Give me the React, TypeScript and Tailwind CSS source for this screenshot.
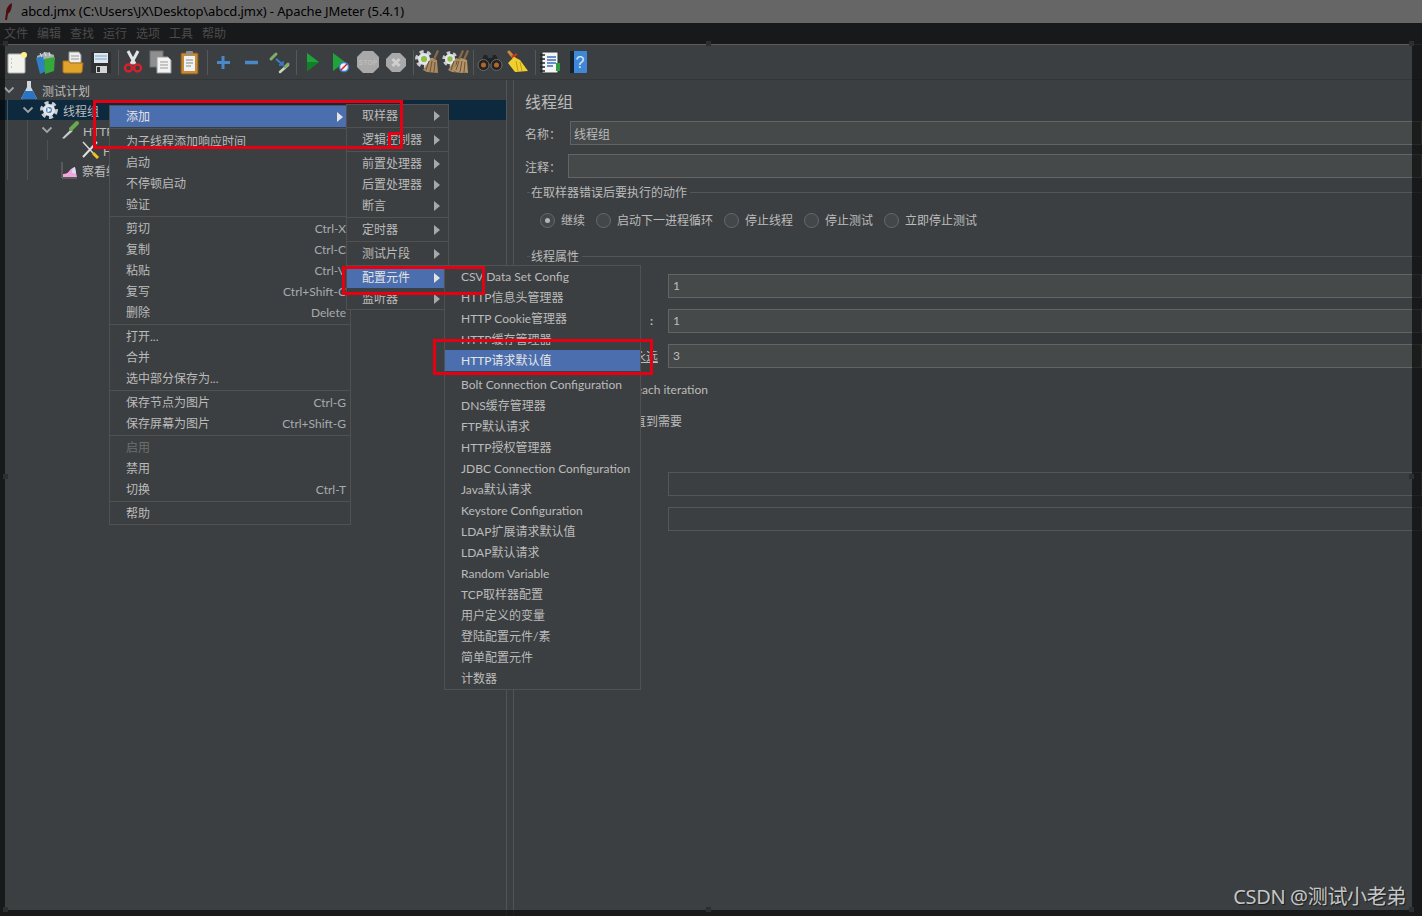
import type { ReactNode } from 'react'

type MenuItem = { label?: string; shortcut?: string; arrow?: boolean; active?: boolean; disabled?: boolean; sep?: boolean; tall?: boolean }

const mainMenu: MenuItem[] = [
  { label: '添加', arrow: true, active: true },
  { sep: true },
  { label: '为子线程添加响应时间', tall: true },
  { label: '启动' },
  { label: '不停顿启动' },
  { label: '验证' },
  { sep: true },
  { label: '剪切', shortcut: 'Ctrl-X' },
  { label: '复制', shortcut: 'Ctrl-C' },
  { label: '粘贴', shortcut: 'Ctrl-V' },
  { label: '复写', shortcut: 'Ctrl+Shift-C' },
  { label: '删除', shortcut: 'Delete' },
  { sep: true },
  { label: '打开...' },
  { label: '合并' },
  { label: '选中部分保存为...' },
  { sep: true },
  { label: '保存节点为图片', shortcut: 'Ctrl-G' },
  { label: '保存屏幕为图片', shortcut: 'Ctrl+Shift-G' },
  { sep: true },
  { label: '启用', disabled: true },
  { label: '禁用' },
  { label: '切换', shortcut: 'Ctrl-T' },
  { sep: true },
  { label: '帮助' },
]

const addMenu: MenuItem[] = [
  { label: '取样器', arrow: true },
  { sep: true },
  { label: '逻辑控制器', arrow: true },
  { sep: true },
  { label: '前置处理器', arrow: true },
  { label: '后置处理器', arrow: true },
  { label: '断言', arrow: true },
  { sep: true },
  { label: '定时器', arrow: true },
  { sep: true },
  { label: '测试片段', arrow: true },
  { sep: true },
  { label: '配置元件', arrow: true, active: true },
  { label: '监听器', arrow: true },
]

const configMenu: MenuItem[] = [
  { label: 'CSV Data Set Config' },
  { label: 'HTTP信息头管理器' },
  { label: 'HTTP Cookie管理器' },
  { label: 'HTTP缓存管理器' },
  { label: 'HTTP请求默认值', active: true },
  { sep: true },
  { label: 'Bolt Connection Configuration' },
  { label: 'DNS缓存管理器' },
  { label: 'FTP默认请求' },
  { label: 'HTTP授权管理器' },
  { label: 'JDBC Connection Configuration' },
  { label: 'Java默认请求' },
  { label: 'Keystore Configuration' },
  { label: 'LDAP扩展请求默认值' },
  { label: 'LDAP默认请求' },
  { label: 'Random Variable' },
  { label: 'TCP取样器配置' },
  { label: '用户定义的变量' },
  { label: '登陆配置元件/素' },
  { label: '简单配置元件' },
  { label: '计数器' },
]

function Menu({ items, className, inset }: { items: MenuItem[]; className: string; inset: string }) {
  return (
    <div className={`absolute bg-[#3c3f41] border border-[#515151] ${className}`}>
      {items.map((item, i) =>
        item.sep ? (
          <div key={i} className="h-[3px] flex items-center">
            <div className="h-px w-full bg-[#515151]" />
          </div>
        ) : (
          <div
            key={i}
            className={`flex items-center justify-between whitespace-nowrap ${item.tall ? 'h-[22px]' : 'h-[21px]'} ${inset} ${
              item.active ? 'bg-[#4b6eaf] text-[#e4e4e4]' : item.disabled ? 'text-[#6e6e6e]' : 'text-[#bbbbbb]'
            }`}
          >
            <span className="pt-px">{item.label}</span>
            {item.shortcut && <span className="text-[#a6abad]">{item.shortcut}</span>}
            {item.arrow && (
              <svg width="6" height="10" viewBox="0 0 6 10" className="mr-[3px]">
                <path d="M0 0l6 5-6 5z" fill={item.active ? '#e4e4e4' : '#a8a8a8'} />
              </svg>
            )}
          </div>
        ),
      )}
    </div>
  )
}

function Tool({ children }: { children: ReactNode }) {
  return (
    <div className="w-[28px] h-[28px] shrink-0">
      <svg width="28" height="28" viewBox="0 0 28 28">
        {children}
      </svg>
    </div>
  )
}

function Broom({ x = 0, fill = '#a98a62' }: { x?: number; fill?: string }) {
  return (
    <g transform={`translate(${x} 0)`}>
      <path d="M23 2l2 1-4 9-2-1z" fill="#8a6a45" />
      <path d="M17 10l6 2 1 13-11-1-4-2z" fill={fill} />
      <path d="M15 13l-3 9M18 13l-2 11M21 14l-1 10" stroke="#6e5434" />
    </g>
  )
}

function Gear({ cx, cy, r, core }: { cx: number; cy: number; r: number; core: string }) {
  return (
    <g>
      <circle cx={cx} cy={cy} r={r} fill="none" stroke="#c9ccd0" strokeWidth={r * 0.55} strokeDasharray={`${r * 0.55} ${r * 0.47}`} />
      <circle cx={cx} cy={cy} r={r * 0.86} fill="#e3e5e8" />
      <circle cx={cx} cy={cy} r={r * 0.44} fill={core} />
    </g>
  )
}

function Dropper({ d }: { d: string }) {
  return <path d={d} stroke="#7fae6a" strokeWidth="3" strokeLinecap="round" fill="none" />
}

function Chevron() {
  return (
    <svg width="12" height="8" viewBox="0 0 12 8" className="shrink-0">
      <path d="M1.5 1.5L6 6l4.5-4.5" fill="none" stroke="#a0a3a5" strokeWidth="1.8" />
    </svg>
  )
}

function Radio({ label, checked }: { label: string; checked?: boolean }) {
  return (
    <div className="flex items-center gap-[6px]">
      <div className="w-[15px] h-[15px] rounded-full border border-[#666a6c] bg-[#43474a] flex items-center justify-center">
        {checked && <div className="w-[5px] h-[5px] rounded-full bg-[#b4b4b4]" />}
      </div>
      <span className="pt-px">{label}</span>
    </div>
  )
}

function Legend({ children }: { children: ReactNode }) {
  return (
    <div className="h-[16px] ml-[2px] flex items-center gap-[1px]">
      <div className="w-[3px] h-px bg-[#555555]" />
      <span className="pr-[2px] pt-[2px]">{children}</span>
      <div className="flex-1 h-px bg-[#555555]" />
    </div>
  )
}

function Handle({ className }: { className: string }) {
  return <div className={`absolute w-[5px] h-[5px] bg-[#2c2e2f] ${className}`} />
}

export default function App() {
  return (
    <div className="relative w-[1422px] h-[916px] overflow-hidden flex flex-col bg-[#3c3f41] text-[12px] text-[#bbbbbb] font-['Lato','Noto_Sans_CJK_SC',sans-serif]">
      {/* title bar */}
      <div className="h-[23px] shrink-0 bg-white flex items-center text-black text-[13px] tracking-[-0.1px] font-['Noto_Sans',sans-serif]">
        <svg width="10" height="18" viewBox="0 0 10 18" className="ml-[3px] mr-[8px]">
          <path d="M9 0C5 2 3 6 3 10l-1 7 2 0 1-6c3-2 4-7 4-11z" fill="#c02028" />
        </svg>
        <span>abcd.jmx (C:\Users\JX\Desktop\abcd.jmx) - Apache JMeter (5.4.1)</span>
      </div>

      {/* menu bar */}
      <div className="h-[21px] shrink-0 flex items-center">
        {['文件', '编辑', '查找', '运行', '选项', '工具', '帮助'].map(m => (
          <span key={m} className="w-[33px] pl-[4px]">{m}</span>
        ))}
      </div>

      {/* toolbar */}
      <div className="h-[36px] shrink-0 flex items-center pl-[3px] border-t border-b border-t-[#5a5c5e] border-b-[#333537]">
        <Tool>
          <rect x="5" y="6" width="17" height="19" rx="1" fill="#f3f3ee" stroke="#b0b0b0" />
          <path d="M8 11h1M8 15h1M8 19h1" stroke="#999" />
          <circle cx="21" cy="7" r="3" fill="#fff08a" />
        </Tool>
        <Tool>
          <path d="M6 8l9-4 8 3v5H6z" fill="#a8b0b0" />
          <path d="M5 10l7-2 3 15-6 3z" fill="#2f7fc4" />
          <path d="M13 11l11-2-1 14-9 3z" fill="#36a83c" />
          <path d="M9 5l2 4M13 4l2 4M18 4l1 4" stroke="#e0e4e4" />
        </Tool>
        <Tool>
          <path d="M10 4h10l2 3v8H10z" fill="#eeeeee" stroke="#999" />
          <path d="M12 8h8M12 11h8" stroke="#999" />
          <path d="M4 13h6l1 2h13l-1 9a2 2 0 0 1-2 1H6a2 2 0 0 1-2-1z" fill="#e0a32c" stroke="#a77415" />
        </Tool>
        <Tool>
          <path d="M4 4h20v21H4z" fill="#2f3032" />
          <rect x="7" y="5" width="14" height="10" fill="#dfe6ee" />
          <path d="M8 8h12M8 11h12" stroke="#7ea1cc" />
          <rect x="9" y="18" width="11" height="7" fill="#d4d4d4" />
          <rect x="10" y="19" width="3" height="5" fill="#2f3032" />
        </Tool>

        <div className="w-px h-[25px] bg-[#555759] ml-[3px]" />

        <Tool>
          <path d="M9 3l7 13M19 3l-7 13" stroke="#e2e4e6" strokeWidth="3" />
          <circle cx="9.5" cy="20" r="3.5" fill="none" stroke="#d4212a" strokeWidth="2.5" />
          <circle cx="18.5" cy="20" r="3.5" fill="none" stroke="#d4212a" strokeWidth="2.5" />
        </Tool>
        <Tool>
          <rect x="3" y="3" width="13" height="16" fill="#8d8f90" stroke="#707070" />
          <path d="M10 9h11l3 3v13H10z" fill="#f2f2f2" stroke="#999" />
          <path d="M13 14h8M13 17h8M13 20h8" stroke="#999" />
        </Tool>
        <Tool>
          <rect x="6" y="5" width="17" height="21" rx="1" fill="#c98a38" stroke="#7b5520" />
          <path d="M9 8h11v15H9z" fill="#f1f1f1" />
          <rect x="11" y="3" width="7" height="4" rx="1" fill="#8d8f90" />
          <path d="M11 12h7M11 15h7M11 18h5" stroke="#888" />
        </Tool>

        <div className="w-px h-[25px] bg-[#555759] ml-[4px] mr-px" />

        <Tool>
          <path d="M14 8v13M8 14.5h13" stroke="#4a88c7" strokeWidth="3" />
        </Tool>
        <Tool>
          <path d="M8 14.5h13" stroke="#4a88c7" strokeWidth="3.5" />
        </Tool>
        <Tool>
          <Dropper d="M6 11l5-5" />
          <path d="M11 11l6 5" stroke="#3d7fd0" strokeWidth="2" />
          <path d="M18 13l0 4-4 0" fill="none" stroke="#3d7fd0" strokeWidth="1.5" />
          <path d="M15 24l8-7" stroke="#c9d6c0" strokeWidth="2.5" strokeLinecap="round" />
          <path d="M20 19l3-3" stroke="#7fae6a" strokeWidth="3" strokeLinecap="round" />
        </Tool>

        <div className="w-px h-[25px] bg-[#555759] ml-[3px] mr-px" />

        <Tool>
          <path d="M9 5l12 9-12 9z" fill="#1fa33a" />
          <path d="M9 14h12l-12 9z" fill="#0f7f2a" />
        </Tool>
        <Tool>
          <path d="M7 5l12 9-12 9z" fill="#1fa33a" />
          <circle cx="18" cy="19" r="4.5" fill="#f2f2f2" stroke="#3d7fd0" strokeWidth="1.5" />
          <path d="M15 22l6-6" stroke="#d4212a" strokeWidth="1.5" />
        </Tool>
        <Tool>
          <path d="M9 3h10l6 6v10l-6 6H9l-6-6V9z" fill="#a9a9a9" />
          <text x="14" y="17" textAnchor="middle" fontSize="7" fontWeight="700" fill="#bcbcbc" fontFamily="Liberation Sans, sans-serif">STOP</text>
        </Tool>
        <Tool>
          <path d="M10 5h8l6 6v7l-6 6h-8l-6-6v-7z" fill="#a9a9a9" />
          <path d="M10.5 11l7 7M17.5 11l-7 7" stroke="#cfcfcf" strokeWidth="3" />
        </Tool>

        <div className="w-px h-[25px] bg-[#555759] ml-[3px]" />

        <Tool>
          <Gear cx={10} cy={11} r={7} core="#8fbf45" />
          <Broom />
        </Tool>
        <Tool>
          <Gear cx={8} cy={11} r={6} core="#8fbf45" />
          <Broom x={-3} />
          <Broom x={2} fill="#b3946b" />
        </Tool>

        <div className="w-px h-[25px] bg-[#555759] ml-[3px] mr-[2px]" />

        <Tool>
          <path d="M4 16l4-9h3l1 3h4l1-3h3l4 9z" fill="#232323" />
          <circle cx="7.5" cy="17" r="5.5" fill="#232323" stroke="#6a6a6a" />
          <circle cx="20.5" cy="17" r="5.5" fill="#232323" stroke="#6a6a6a" />
          <circle cx="7.5" cy="17" r="2.5" fill="#b3672c" />
          <circle cx="20.5" cy="17" r="2.5" fill="#b3672c" />
        </Tool>
        <Tool>
          <path d="M5 4l5 6" stroke="#c98a38" strokeWidth="3" strokeLinecap="round" />
          <path d="M8 9l5-3" stroke="#cc3322" strokeWidth="2.5" />
          <path d="M10 9l6 3 8 11-13 1-7-9z" fill="#f0d02e" />
          <path d="M12 13l2 10M16 14l2 9" stroke="#c49a14" />
        </Tool>

        <div className="w-px h-[25px] bg-[#555759] ml-[3px]" />

        <Tool>
          <rect x="6" y="4" width="16" height="21" fill="#f4f4f4" stroke="#333" />
          <path d="M4 7h5M4 11h5M4 15h5M4 19h5M4 23h5" stroke="#222" strokeWidth="1.5" />
          <path d="M11 9h9M11 12h9M11 15h9M11 18h6" stroke="#3d6fb8" strokeWidth="1.5" />
          <rect x="20" y="15" width="4" height="8" fill="#2f9c40" />
        </Tool>
        <Tool>
          <rect x="6" y="3" width="17" height="22" rx="1" fill="#3f88d8" />
          <rect x="6" y="3" width="4" height="22" fill="#16222e" />
          <text x="16" y="20" textAnchor="middle" fontSize="16" fill="#dce8f5" fontFamily="Liberation Sans, sans-serif">?</text>
        </Tool>
      </div>

      <div className="flex-1 flex min-h-0">
        {/* tree */}
        <div className="relative w-[506px] shrink-0 flex flex-col">
          <div className="h-[20px] flex items-center pl-[3px]">
            <Chevron />
            <svg width="20" height="20" viewBox="0 0 20 20" className="ml-[4px] shrink-0">
              <path d="M8 1h4v6l5 10a1 1 0 0 1-1 2H4a1 1 0 0 1-1-2l5-10z" fill="#cfd8de" />
              <path d="M6 11h8l3 6a1 1 0 0 1-1 2H4a1 1 0 0 1-1-2z" fill="#2a74c8" />
            </svg>
            <span className="ml-[3px] pt-[4px]">测试计划</span>
          </div>
          <div className="h-[20px] flex items-center pl-[22px] bg-[#0d293e]">
            <Chevron />
            <svg width="20" height="20" viewBox="0 0 20 20" className="ml-[5px] shrink-0">
              <Gear cx={10} cy={10} r={7} core="#4a88c7" />
              <path d="M8.5 7.5l4 2.5-4 2.5z" fill="#f2f2f2" />
            </svg>
            <span className="ml-[4px] pt-[4px]">线程组</span>
          </div>
          <div className="h-[20px] flex items-center pl-[41px]">
            <Chevron />
            <svg width="20" height="20" viewBox="0 0 20 20" className="ml-[7px] shrink-0">
              <path d="M2 18l9-9 2 2-9 8z" fill="#c8cdd0" stroke="#555" strokeWidth=".5" />
              <path d="M11 9l6-6" stroke="#6aa84f" strokeWidth="4" strokeLinecap="round" />
            </svg>
            <span className="ml-[3px] pt-[4px] w-[26px] overflow-hidden whitespace-nowrap">HTTP请求</span>
          </div>
          <div className="h-[20px] flex items-center pl-[80px]">
            <svg width="20" height="20" viewBox="0 0 20 20" className="shrink-0">
              <path d="M3 2l10 11" stroke="#d8d8d8" strokeWidth="1.5" />
              <path d="M13 13l5 5" stroke="#f2c21a" strokeWidth="3" />
              <path d="M17 2L3 17" stroke="#e0e0e0" strokeWidth="2" />
            </svg>
            <span className="ml-[3px] pt-[4px] w-[6px] overflow-hidden whitespace-nowrap">HTTP请求默认值</span>
          </div>
          <div className="h-[20px] flex items-center pl-[59px]">
            <svg width="20" height="20" viewBox="0 0 20 20" className="shrink-0">
              <path d="M3 2v16h15" fill="none" stroke="#777" />
              <path d="M4 17v-3c3 0 5-1 7-4 2-2 4-3 5-2l2 9z" fill="#f2a6dc" />
              <path d="M13 12c0-2 1-5 3-5l1 6c-2 1-4 0-4-1z" fill="#cfe4f5" />
            </svg>
            <span className="ml-[3px] pt-[4px] w-[27px] overflow-hidden whitespace-nowrap">察看结果树</span>
          </div>
          <div className="absolute left-[7px] top-[20px] w-px h-[80px] bg-[#4f5254]" />
          <div className="absolute left-[27px] top-[40px] w-px h-[60px] bg-[#4f5254]" />
          <div className="absolute left-[47px] top-[60px] w-px h-[20px] bg-[#4f5254]" />
        </div>

        {/* split bar */}
        <div className="w-[8px] shrink-0 border-l border-r border-[#515355]" />

        {/* thread group panel */}
        <div className="flex-1 min-w-0 pl-[11px] flex flex-col">
          <div className="mt-[11px] h-[22px] text-[16px] leading-[22px]">线程组</div>

          <div className="mt-[8px] flex items-center">
            <span className="w-[45px] shrink-0 pt-[4px]">名称：</span>
            <div className="flex-1 h-[24px] bg-[#45494a] border border-[#646464] pl-[3px] pt-[4px] flex items-center">线程组</div>
          </div>
          <div className="mt-[9px] flex items-center">
            <span className="w-[43px] shrink-0 pt-[4px]">注释：</span>
            <div className="flex-1 h-[24px] bg-[#45494a] border border-[#646464]" />
          </div>

          <div className="mt-[6px]">
            <Legend>在取样器错误后要执行的动作</Legend>
          </div>
          <div className="mt-[12px] h-[16px] pl-[15px] flex items-center gap-[11px]">
            <Radio label="继续" checked />
            <Radio label="启动下一进程循环" />
            <Radio label="停止线程" />
            <Radio label="停止测试" />
            <Radio label="立即停止测试" />
          </div>

          <div className="mt-[20px]">
            <Legend>线程属性</Legend>
          </div>
          <div className="mt-[10px] flex items-center">
            <div className="w-[143px] shrink-0" />
            <div className="flex-1 h-[24px] bg-[#45494a] border border-[#646464] pl-[4px] flex items-center">1</div>
          </div>
          <div className="mt-[11px] flex items-center">
            <span className="w-[143px] shrink-0 pr-[15px] text-right font-bold">:</span>
            <div className="flex-1 h-[24px] bg-[#45494a] border border-[#646464] pl-[4px] flex items-center">1</div>
          </div>
          <div className="mt-[11px] flex items-center">
            <div className="w-[143px] shrink-0 pr-[10px] flex justify-end">
              <div className="w-[17px] flex justify-end overflow-hidden">
                <span className="underline shrink-0 pt-px">永远</span>
              </div>
            </div>
            <div className="flex-1 h-[24px] bg-[#45494a] border border-[#646464] pl-[4px] flex items-center">3</div>
          </div>
          <div className="mt-[13px] h-[16px] ml-[116px] w-[67px] flex justify-end overflow-hidden">
            <span className="shrink-0 whitespace-nowrap">Same user on each iteration</span>
          </div>
          <div className="mt-[15px] h-[16px] ml-[116px] w-[41px] flex justify-end overflow-hidden">
            <span className="shrink-0 whitespace-nowrap pt-px">延迟创建线程直到需要</span>
          </div>

          <div className="mt-[44px] flex items-center">
            <div className="w-[143px] shrink-0" />
            <div className="flex-1 h-[24px] border border-[#545658]" />
          </div>
          <div className="mt-[11px] flex items-center">
            <div className="w-[143px] shrink-0" />
            <div className="flex-1 h-[24px] border border-[#545658]" />
          </div>
        </div>
      </div>

      {/* popup menus */}
      <Menu items={mainMenu} inset="pl-[16px] pr-[4px]" className="left-[109px] top-[105px] w-[242px]" />
      <Menu items={addMenu} inset="pl-[15px] pr-[5px]" className="left-[346px] top-[104px] w-[103px]" />
      <Menu items={configMenu} inset="pl-[16px]" className="left-[444px] top-[265px] w-[197px]" />

      {/* red annotation boxes */}
      <div className="absolute left-[93px] top-[100px] w-[310px] h-[49px] border-[3px] border-[#e60012]" />
      <div className="absolute left-[388px] top-[132px] w-[15px] h-[17px] border-[3px] border-[#e60012]" />
      <div className="absolute left-[342px] top-[266px] w-[143px] h-[29px] border-[3px] border-[#e60012]" />
      <div className="absolute left-[433px] top-[339px] w-[220px] h-[36px] border-[3px] border-[#e60012]" />

      {/* snipping tool dim around the selection */}
      <div className="absolute left-0 top-0 w-full h-[44px] bg-black/60" />
      <div className="absolute left-0 top-[44px] w-[5px] h-[872px] bg-black/60" />
      <div className="absolute right-0 top-[44px] w-[10px] h-[872px] bg-black/60" />
      <div className="absolute left-[5px] top-[910px] w-[1407px] h-[6px] bg-black/60" />
      <Handle className="left-[3px] top-[41px]" />
      <Handle className="left-[706px] top-[41px]" />
      <Handle className="left-[1409px] top-[41px]" />
      <Handle className="left-[3px] top-[474px]" />
      <Handle className="left-[1409px] top-[474px]" />
      <Handle className="left-[3px] top-[907px]" />
      <Handle className="left-[706px] top-[907px]" />
      <Handle className="left-[1409px] top-[907px]" />

      <div className="absolute right-[16px] top-[884px] text-[20px] leading-[26px] tracking-[-0.35px] text-[#c4c6c7] font-['Noto_Sans','Noto_Sans_CJK_SC',sans-serif] [text-shadow:1px_1px_1px_#1c1c1c]">
        CSDN @测试小老弟
      </div>
    </div>
  )
}
